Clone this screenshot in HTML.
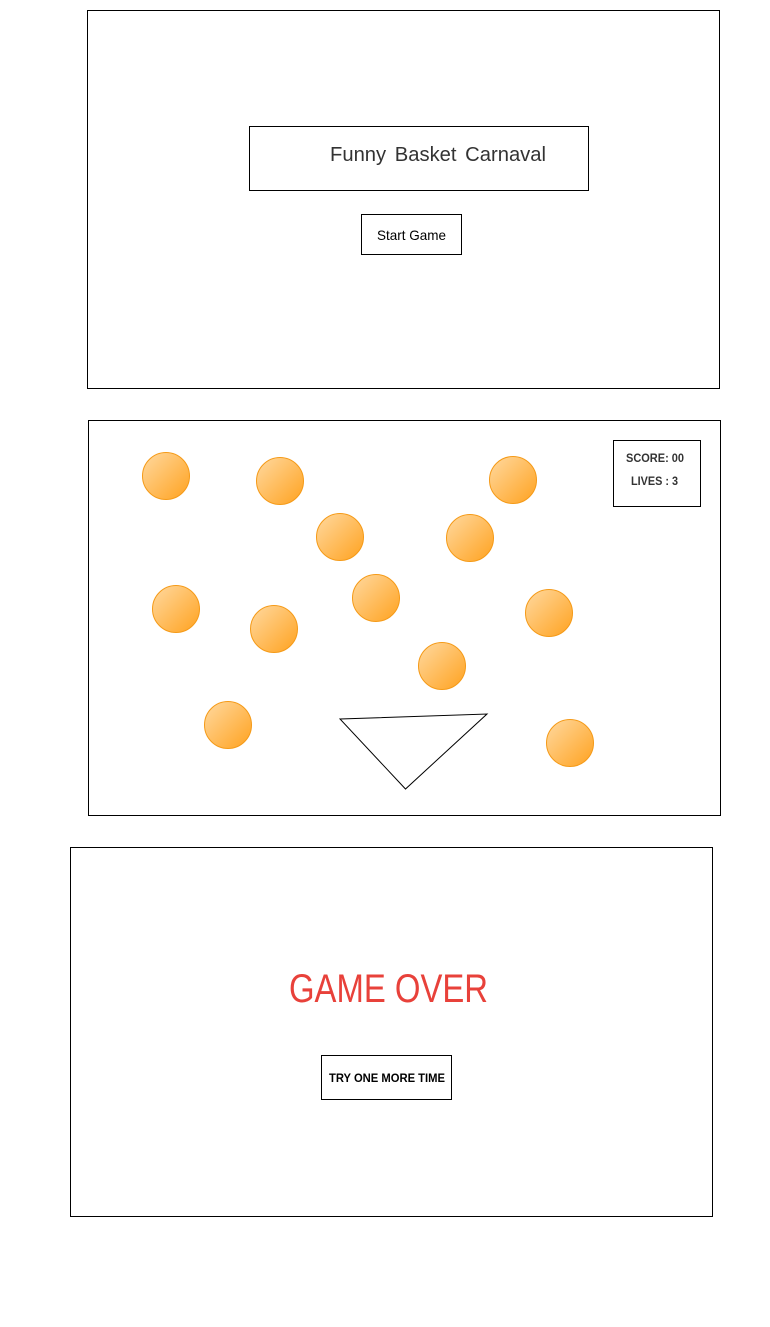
<!DOCTYPE html>
<html><head><meta charset="utf-8"><style>html,body{margin:0;padding:0;background:#fff}svg{display:block}</style></head>
<body>
<svg width="770" height="1327" viewBox="0 0 770 1327" xmlns="http://www.w3.org/2000/svg" font-family="Liberation Sans, sans-serif">
<defs>
<linearGradient id="g" x1="0" y1="0" x2="1" y2="1">
<stop offset="0" stop-color="#ffd9a0"/><stop offset="1" stop-color="#ffa21f"/>
</linearGradient>
<g id="b"><circle r="23.5" fill="url(#g)" stroke="#f59a17" stroke-width="1"/></g>
</defs>
<rect x="87.5" y="10.5" width="632" height="378" fill="none" stroke="#000"/>
<rect x="249.5" y="126.5" width="339" height="64" fill="none" stroke="#000"/>
<text x="330" y="161" font-size="20" fill="#333" word-spacing="3" textLength="216" lengthAdjust="spacingAndGlyphs">Funny Basket Carnaval</text>
<rect x="361.5" y="214.5" width="100" height="40" fill="none" stroke="#000"/>
<text x="377" y="240" font-size="14" fill="#000" textLength="69" lengthAdjust="spacingAndGlyphs">Start Game</text>

<rect x="88.5" y="420.5" width="632" height="395" fill="none" stroke="#000"/>
<rect x="613.5" y="440.5" width="87" height="66" fill="none" stroke="#000"/>
<text x="626" y="462" font-size="12" font-weight="bold" fill="#333" textLength="58" lengthAdjust="spacingAndGlyphs">SCORE: 00</text>
<text x="631" y="485" font-size="12" font-weight="bold" fill="#333" textLength="47" lengthAdjust="spacingAndGlyphs">LIVES : 3</text>
<use href="#b" x="166" y="476"/>
<use href="#b" x="280" y="481"/>
<use href="#b" x="513" y="480"/>
<use href="#b" x="340" y="537"/>
<use href="#b" x="470" y="538"/>
<use href="#b" x="176" y="609"/>
<use href="#b" x="274" y="629"/>
<use href="#b" x="376" y="598"/>
<use href="#b" x="549" y="613"/>
<use href="#b" x="442" y="666"/>
<use href="#b" x="228" y="725"/>
<use href="#b" x="570" y="743"/>
<polygon points="340,719 487,714 405.5,789" fill="none" stroke="#000" stroke-width="1"/>

<rect x="70.5" y="847.5" width="642" height="369" fill="none" stroke="#000"/>
<text x="289" y="1002" font-size="40" fill="#e8413a" textLength="199" lengthAdjust="spacingAndGlyphs">GAME OVER</text>
<rect x="321.5" y="1055.5" width="130" height="44" fill="none" stroke="#000"/>
<text x="329" y="1082" font-size="12" font-weight="bold" fill="#000" textLength="116" lengthAdjust="spacingAndGlyphs">TRY ONE MORE TIME</text>
</svg>
</body></html>
